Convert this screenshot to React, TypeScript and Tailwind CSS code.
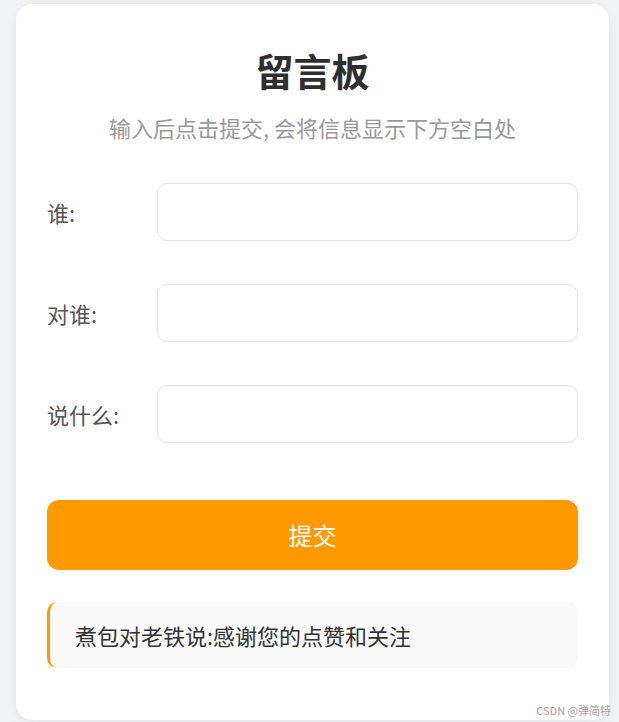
import { useState } from 'react';

const font = { fontFamily: '"Noto Sans CJK SC", "Noto Sans", sans-serif' };

interface FieldProps {
  label: string;
  value: string;
  onChange: (v: string) => void;
}

function Field({ label, value, onChange }: FieldProps) {
  return (
    <div className="flex items-center h-[58px]">
      <label className="w-[110px] shrink-0 text-[22px] text-[#555]">{label}</label>
      <input
        value={value}
        onChange={(e) => onChange(e.target.value)}
        className="flex-1 h-[58px] rounded-[10px] border border-[#e2e4e8] bg-white px-4 text-[18px] outline-none"
      />
    </div>
  );
}

export default function App() {
  const [who, setWho] = useState('');
  const [to, setTo] = useState('');
  const [msg, setMsg] = useState('');
  const [messages, setMessages] = useState<string[]>(['煮包对老铁说:感谢您的点赞和关注']);

  const submit = () => {
    if (!who || !to || !msg) return;
    setMessages((prev) => [...prev, `${who}对${to}说:${msg}`]);
    setWho('');
    setTo('');
    setMsg('');
  };

  return (
    <div className="min-h-[722px] h-[722px] overflow-hidden bg-[#f1f2f6] pl-4 pr-[10px] pt-1 relative" style={font}>
      <div className="bg-white rounded-[16px] shadow-[0_2px_12px_rgba(0,0,0,0.06)] px-[31px] pt-[38px] pb-[52px]">
        <h1 className="text-center text-[38px] leading-[56px] font-bold text-[#2f2f2f]">留言板</h1>
        <p className="text-center text-[22px] text-[#999] mt-[14px] leading-[30px]">
          输入后点击提交, 会将信息显示下方空白处
        </p>

        <div className="mt-[41px] flex flex-col gap-[43px]">
          <Field label="谁:" value={who} onChange={setWho} />
          <Field label="对谁:" value={to} onChange={setTo} />
          <Field label="说什么:" value={msg} onChange={setMsg} />
        </div>

        <button
          onClick={submit}
          className="mt-[57px] w-full h-[70px] rounded-[12px] bg-[#ff9900] text-white text-[24px]"
        >
          提交
        </button>

        <div className="mt-[32px] flex flex-col gap-3">
          {messages.map((m, i) => (
            <div
              key={i}
              className="h-[66px] flex items-center rounded-[10px] bg-[#f9f9f9] border-l-[3px] border-[#ff9900] pl-[25px] text-[22px] text-[#333]"
            >
              {m}
            </div>
          ))}
        </div>
      </div>
      <div className="absolute right-[8px] bottom-[4px] text-[11px] text-[#a0a0a0]">CSDN @弹简特</div>
    </div>
  );
}
